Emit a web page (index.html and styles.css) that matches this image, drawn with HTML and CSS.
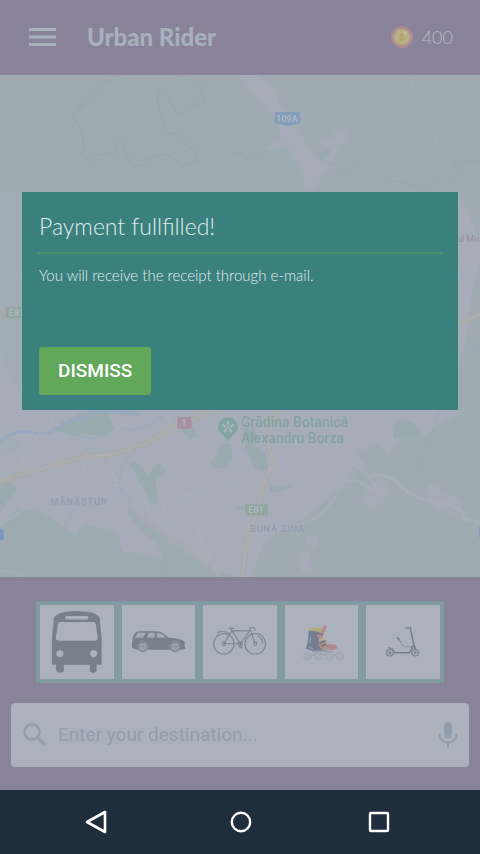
FILE: index.html
```html
<!DOCTYPE html>
<html lang="en">
<head>
<meta charset="utf-8">
<meta name="viewport" content="width=device-width, initial-scale=1">
<title>Urban Rider</title>
<link rel="stylesheet" href="styles.css">
</head>
<body>
<div class="app">
  <header class="topbar">
    <button class="icon-button menu" type="button" aria-label="Menu">
      <svg width="28" height="20" viewBox="0 0 28 20"><path d="M1 2.500H28M1 10H28M1 17.500H28" stroke="currentColor" stroke-width="3"/></svg>
    </button>
    <h1 class="brand">Urban Rider</h1>
    <div class="balance">
      <svg width="22" height="22" viewBox="0 0 22 22" aria-hidden="true">
        <circle cx="11" cy="11" r="11" fill="#ab8b95"/>
        <circle cx="11" cy="11" r="8.500" fill="#b5a783"/>
        <circle cx="11" cy="11" r="7" fill="#b7b183"/>
        <path d="M13 8.800C12 7.700 9 7.800 9 9.500S13 11 13 12.800 10 14.500 8.800 13.200M11 7V15" fill="none" stroke="#b2a06e" stroke-width="1.200"/>
        <circle cx="14.500" cy="7" r="1.500" fill="#bdc2a5"/>
      </svg>
      <span>400</span>
    </div>
  </header>

  <main class="map">
    <svg class="map-canvas" viewBox="0 75 480 502" preserveAspectRatio="xMidYMid slice" role="img" aria-label="City map">
      <rect y="75" width="480" height="502" fill="#a0abb1"/>
      <path fill="#9eacb2" stroke="#9ba5ab" stroke-width="1" d="M118 75L103 84 90 98 72 115 83 133 83 155 90 161 91 157 100 155 115 153 120 141 125 150 132 166 151 165 145 157 165 154 174 158 180 166 199 161 196 153 177 135 166 132 157 100 158 92 165 91 177 115 205 100 200 85 190 80 175 75Z"/>
      <path fill="#9eacb2" d="M230 155L240 152 246 160 262 152 284 143 300 158 312 190 360 184 420 187 461 174 453 162H480V200H230Z"/>
      <path fill="none" stroke="#9aa6ab" opacity=".7" d="M230 155L240 152 246 160 262 152 284 143M328 162L347 173 369 156 392 180 420 187 461 174 453 162H480"/>
      <!-- built-up areas -->
      <path fill="#a5acb7" d="M240 75H257L276 88 278 100 291 120 309 148 318 160 326 163 330 170 321 177 314 190H306L300 168 291 155 288 145 267 151 265 147 282 140 276 120 260 103 247 87ZM318 141L332 138 335 131 346 131 347 138 338 147 332 163 325 157 326 147Z"/>
      <path fill="#a6adb8" d="M0 260L22 240V192H458L480 240V260L470 300 465 345 452 378 458 415 435 426 425 435 400 435 389 454 378 444 357 452 364 465 348 479 320 505 300 520 265 540 250 577H240L216 570 190 547 165 532 130 508 128 514 142 532 163 547 160 570 145 553 125 555 120 545 121 535 108 529 84 524 76 535 55 520 40 512 0 525Z"/>
      <path fill="#a2acb4" d="M0 192H22V400L0 350ZM0 440Q10 436 18 440V452L0 456Z"/>
      <path fill="#9eacb1" d="M0 525L17 508 40 512 76 535 84 524 108 529 121 535 119 552 145 553 163 560V577H0ZM128 512L145 526 172 534 205 565 219 577H163L164 551Z"/>
      <path fill="#a5acb7" d="M366 490L378 478 385 483 390 492 375 508 361 502ZM427 484L437 484 441 492 453 496 463 506 456 515 439 510 428 502ZM299 552L309 553 312 570 300 572ZM307 534L319 537 315 550 306 543Z"/>
      <path fill="#a8abb3" opacity=".7" d="M132 504L158 525 202 550 217 573 175 545 137 516ZM143 466L155 460 160 468 151 473ZM172 431L178 430 181 440 175 442Z"/>
      <!-- parks -->
      <path fill="#9aaaae" d="M53 430L82 412 107 414 115 430 108 437 85 433 75 436ZM130 463L137 462 149 475 154 466 161 463 165 470 156 480 157 502 150 505 147 495 139 481ZM180 431L192 426 198 435 191 439ZM220 443H230L233 458 225 467 216 468 210 462 217 455ZM242 428L254 427 256 446 266 455 269 472 255 468 246 447ZM0 482L12 482 17 488 8 500 0 513ZM9 520L17 520 13 526ZM394 425L400 419 411 422 420 428V437L393 438ZM270 485H292L284 491 270 492ZM235 506H246V509H235ZM318 155L328 148 331 153 322 160Z"/>
      <!-- water -->
      <g fill="none" stroke="#99a8bc">
        <path stroke-width="3" d="M0 442Q14 428 31 432T57 428 80 419 90 410"/>
        <path stroke-width="6" d="M88 412Q116 408 140 413"/>
        <path opacity=".4" stroke-width="2" d="M57 428Q76 438 98 438M119 428Q140 432 152 423T170 412M140 447C121 460 120 475 119 487L130 501V515L155 533 164 555 162 577M78 505L65 526M438 410L434 430 422 456 425 495 429 505M458 276Q470 276 480 271M458 355L480 347"/>
      </g>
      <!-- streets -->
      <g fill="none" stroke="#abb1bd" opacity=".65" stroke-width="2">
        <path d="M50 410L52 425 41 432 24 456 17 485 25 509 81 486 119 485 133 491 148 505 151 516 166 529 168 524 163 510 167 502 180 496 219 485 240 482M82 484L84 460 80 448 85 443 105 438 139 411M110 454L113 474 119 485M25 509L0 524M177 500L190 512 204 545 219 577M235 444L248 462 254 480M205 430L240 415M166 411L171 428M0 571Q15 570 24 577M250 535Q292 528 310 520T337 492 365 485 368 475L328 446 295 424"/>
        <path stroke-width="3" d="M368 476Q388 472 400 485T440 503 462 518L480 522"/>
        <path stroke-width="1" opacity=".7" d="M382 500L392 515 394 530 401 543 389 554 396 565 385 575M368 503V514L350 526 343 525 349 547 343 549 337 531 320 540M397 490L387 502 409 520 448 548 460 512M409 520L425 502M88 553L89 560 72 575M250 565L270 575 320 572M0 234L6 243 12 267 22 281M458 250L475 320 458 350M480 390L458 415"/>
        <path stroke-width="1" opacity=".7" d="M0 175L14 165 13 140 8 128 0 116M14 165L29 185M20 155L22 142M60 175L70 182M240 78L261 85 280 108M284 118L300 145 311 190M412 75V92L431 104 432 122 437 145Q430 165 395 180L389 175 368 158 350 176M412 92L393 85M424 96L426 88M435 145L439 125M426 125L427 112M445 190L447 176"/>
      </g>
      <!-- trunk roads -->
      <g fill="none" stroke-linejoin="round">
        <path stroke="#aaaba6" stroke-width="5" d="M0 482L18 475 55 465 84 456 114 454 153 440 171 427 190 421 210 409M276 408L271 424 269 446 273 465 265 479 258 508 247 541 242 577M458 323L480 314M0 307L8 313"/>
        <path stroke="#acb0b6" stroke-width="2" d="M0 482L18 475 55 465 84 456 114 454 153 440 171 427 190 421 210 409M276 408L271 424 269 446 273 465 265 479 258 508 247 541 242 577M458 323L480 314M0 307L8 313"/>
        <path stroke="#aaaba6" stroke-width="1" d="M14 469L19 465 25 476 19 484 12 478 22 471M80 451L88 461M210 414L228 408"/>
      </g>
      <!-- road shields -->
      <path fill="#839dbb" d="M275 112H300L301 123 288 126 274 123Z"/>
      <text class="shield" x="287" y="122" text-anchor="middle">109A</text>
      <rect x="6" y="307" width="23" height="11" fill="#91a69e"/>
      <text class="shield" x="9" y="316">E81</text>
      <rect x="245" y="504" width="23" height="11" fill="#91a69e"/>
      <text class="shield" x="256" y="513" text-anchor="middle">E81</text>
      <path fill="#a98f9f" d="M178 416Q184 418 191 416L192 427Q190 429 184 429T177 427Z"/>
      <text class="shield" x="184" y="426" text-anchor="middle">1</text>
      <rect x="-8" y="529" width="12" height="11" rx="2" fill="#7c98bf"/>
      <rect x="479" y="526" width="6" height="11" fill="#7c98bf"/>
      <!-- botanical garden pin -->
      <path fill="#81a59e" d="M228 417A10 10 0 0 1 238 427C238 433 230 435 228 442 226 435 218 433 218 427A10 10 0 0 1 228 417Z"/>
      <g stroke="#aab5bc" stroke-width="2.400" stroke-linecap="round"><path d="M228 424V422M231 426L233 425M230 429L231 431M226 429L225 431M225 426L223 425"/></g>
      <circle cx="228" cy="427" r="1.200" fill="#aab5bc"/>
      <text class="place" x="241" y="427">Grădina Botanică</text>
      <text class="place" x="241" y="443">Alexandru Borza</text>
      <text class="district" x="51" y="505">MĂNĂȘTUR</text>
      <text class="district" x="250" y="532">BUNĂ ZIUA</text>
      <text class="museum" x="479" y="242" text-anchor="end">ul Mu</text>
    </svg>
    <section class="dialog" role="dialog" aria-labelledby="dialog-title">
      <h2 class="dialog-title" id="dialog-title">Payment fullfilled!</h2>
      <p class="dialog-text">You will receive the receipt through e-mail.</p>
      <button class="dismiss" type="button">DISMISS</button>
    </section>
  </main>

  <section class="dock">
    <div class="vehicles">
      <button class="vehicle" type="button" aria-label="Bus">
        <svg viewBox="0 0 74 74">
          <path fill="#78818b" fill-rule="evenodd" d="M12 60V34L14 13Q17 6 37 6T60 13L62 34V60H57V65Q57 68 53.500 68T50 65V60H24V65Q24 68 20.500 68T16 65V60ZM27 11A1.500 1.500 0 0 0 27 14.500H47A1.500 1.500 0 0 0 47 11ZM20.500 17Q18.500 17 18 19L16 33Q16 36 19 36H55Q58 36 58 33L56 19Q55.500 17 53.500 17ZM20 45.500A3.500 3.500 0 1 0 20 52.500 3.500 3.500 0 0 0 20 45.500ZM54 45.500A3.500 3.500 0 1 0 54 52.500 3.500 3.500 0 0 0 54 45.500Z"/>
        </svg>
      </button>
      <button class="vehicle" type="button" aria-label="Car">
        <svg viewBox="0 0 74 74">
          <path fill="#78818b" d="M10 40L11 32 14 27 17 26.500H36Q40 27 47 33 60 34 63 37V42L64 44 60 45H16Q10 44 10 42Z"/>
          <path fill="#a4abb5" d="M14 31L16 28H24L21 33H13ZM25 33L27 28H33V33ZM35 28Q40 28 44 33H35Z"/>
          <g fill="#78818b" stroke="#959ea8" stroke-width=".7"><circle cx="21" cy="42" r="5.300"/><circle cx="53.500" cy="42" r="5.300"/></g>
          <g fill="#a0a8b2"><circle cx="21" cy="42" r="3.800"/><circle cx="53.500" cy="42" r="3.800"/></g>
          <path stroke="#88919b" stroke-width=".8" d="M18 42H24M21 39V45M19 40L23 44M23 40L19 44M50.500 42H56.500M53.500 39V45M51.500 40L55.500 44M55.500 40L51.500 44"/>
        </svg>
      </button>
      <button class="vehicle" type="button" aria-label="Bicycle">
        <svg viewBox="0 0 74 74" fill="none" stroke="#7d8690" stroke-width="1.100">
          <circle cx="21" cy="39" r="10.300"/><circle cx="52.500" cy="39" r="10.300"/>
          <circle cx="21" cy="39" r="1.700"/><circle cx="52.500" cy="39" r="1.700"/><circle cx="37.500" cy="39" r="2"/>
          <path d="M21 39L29 26H47L37.500 39 28 24M21 39H37.500M52.500 39L47 23H50Q53 22 52 26M26 23.500H31M14 28Q21 25 27 29M37.500 39L39 43H36M55 31Q60 34 60 39"/>
        </svg>
      </button>
      <button class="vehicle" type="button" aria-label="Roller skates">
        <svg viewBox="0 0 74 74">
          <path fill="#737e91" d="M24 25L34 27 36 36 44 44 42 46H27L21 44 23 36Z"/>
          <path fill="#b08a8c" d="M36 26L39 20.500 42 21 41 25 38 31 39 36 43 39 51 40 53.500 43 50 45 39 46 34 42 34 35 32 30Z"/>
          <path fill="#b3ab86" d="M24 25Q26 22 30 22.500L36 23 37 26 35 28 31 26 24 26ZM34 35L38 32 40 34 35 38ZM38 41L42 38 44 39 40 43Z"/>
          <path stroke="#687387" stroke-width="1.500" d="M33 28L38 30M35 38L41 36M37 41L42 40"/>
          <path stroke="#a1a9b7" stroke-width="1" d="M24 42L28 44M26 32L25 38M38 45L45 44"/>
          <path stroke="#98a0ac" stroke-width="1.500" d="M27 47H49M19 50H56"/>
          <g fill="#a6adb8" stroke="#9aa2ae" stroke-width=".8"><circle cx="22.500" cy="51.500" r="3.800"/><circle cx="33.500" cy="51.500" r="3.800"/><circle cx="44.500" cy="51.500" r="3.800"/><circle cx="55" cy="51.500" r="3.800"/></g>
        </svg>
      </button>
      <button class="vehicle" type="button" aria-label="Scooter">
        <svg viewBox="0 0 74 74" fill="none" stroke="#78818b" stroke-width="1.100">
          <circle cx="24" cy="48" r="3.300"/><circle cx="49.500" cy="48" r="3.300"/>
          <circle cx="24" cy="48" r="1"/><circle cx="49.500" cy="48" r="1"/>
          <path d="M39 23H45.500M22 43Q27 43 29 47"/>
          <path stroke-width="1.500" d="M44.500 23L49 44"/>
          <path stroke-width=".7" d="M33 35Q35 36 35 38T40 42H46"/>
          <path stroke-width="1.700" d="M28 48H44L48 40 50 44M31 33L34 35"/>
        </svg>
      </button>
    </div>
    <form class="search" role="search">
      <label class="search-label" for="destination" aria-label="Destination">
        <svg width="24" height="24" viewBox="0 0 24 24"><circle cx="9" cy="9" r="7.500" fill="none" stroke="currentColor" stroke-width="2.400"/><path d="M14.500 14.500L22.500 22.500" stroke="currentColor" stroke-width="3"/></svg>
      </label>
      <input class="search-input" id="destination" type="text" placeholder="Enter your destination...">
      <button class="icon-button" type="button" aria-label="Voice search">
        <svg width="20" height="26" viewBox="0 0 20 26"><rect x="6" width="8" height="16" rx="4" fill="currentColor"/><path d="M1.500 12A8.500 8.500 0 0 0 18.500 12M10 20.500V26" fill="none" stroke="currentColor" stroke-width="2"/></svg>
      </button>
    </form>
  </section>

  <nav class="system-nav" aria-label="System navigation">
    <button class="icon-button" type="button" aria-label="Back">
      <svg width="28" height="24" viewBox="0 0 28 24"><path d="M20 2V22L2 12Z" fill="none" stroke="currentColor" stroke-width="2.600" stroke-linejoin="round"/></svg>
    </button>
    <button class="icon-button" type="button" aria-label="Home">
      <svg width="22" height="24" viewBox="0 0 22 24"><circle cx="11" cy="12" r="9.200" fill="none" stroke="currentColor" stroke-width="2.400"/></svg>
    </button>
    <button class="icon-button" type="button" aria-label="Recent apps">
      <svg width="22" height="24" viewBox="0 0 22 24"><rect x="2" y="3" width="18" height="18" rx="1" fill="none" stroke="currentColor" stroke-width="2.400"/></svg>
    </button>
  </nav>
</div>
</body>
</html>
```
FILE: styles.css
```css
* {
  box-sizing: border-box;
}

body {
  margin: 0;
  font-family: Lato, "Liberation Sans", sans-serif;
  background: #88839a;
}

button,
input {
  font: inherit;
  color: inherit;
  border: 0;
  padding: 0;
  background: none;
}

svg {
  display: block;
}

.app {
  display: flex;
  flex-direction: column;
  min-height: 100vh;
}

.icon-button {
  display: flex;
  flex: none;
}

.topbar {
  display: flex;
  align-items: center;
  padding: 19px 27px 21px 28px;
  color: #a8b1bb;
}

.brand {
  flex: 1;
  margin: 0 0 0 31px;
  font-size: 24px;
  line-height: 35px;
  font-weight: 900;
}

.balance {
  display: flex;
  align-items: center;
  gap: 9px;
  color: #b5bdc8;
  font-size: 18px;
  font-weight: 300;
}

.map {
  position: relative;
  display: flex;
  flex: 1;
  align-items: flex-start;
  padding: 117px 22px 160px;
}

.map-canvas {
  position: absolute;
  inset: 0;
  width: 100%;
  height: 100%;
}

.shield {
  font: 700 9px Roboto, sans-serif;
  fill: #abb7c2;
}

.place {
  font: 500 14px Roboto, sans-serif;
  fill: #86a1a2;
}

.district {
  font: 500 9px Roboto, sans-serif;
  letter-spacing: 1px;
  fill: #929aac;
}

.museum {
  font: 400 9px Roboto, sans-serif;
  fill: #958f96;
}

.dialog {
  position: relative;
  flex: 1;
  padding: 18px 15px 15px;
  background: #3a817e;
  color: #e1eeec;
  font-weight: 300;
}

.dialog-title {
  margin: 0;
  padding: 0 2px 9px;
  border-bottom: 2px solid #4b9167;
  font-size: 23px;
  line-height: 33px;
  font-weight: 300;
}

.dialog-text {
  margin: 10px 2px 61px;
  font-size: 15px;
  line-height: 22px;
}

.dismiss {
  margin-left: 2px;
  padding: 0 19px;
  border-radius: 3px;
  background: #62a85b;
  color: #fff;
  font: 500 19px/48px Roboto, sans-serif;
}

.dock {
  display: flex;
  flex-direction: column;
  gap: 20px;
  padding: 24px 11px 23px;
}

.vehicles {
  display: grid;
  grid-template-columns: repeat(5, 1fr);
  margin: 0 25px;
}

.vehicle {
  border: 4px solid #829ba1;
  background: #abb2bc;
}

.search {
  display: flex;
  align-items: center;
  height: 64px;
  padding: 0 11px 0 12px;
  border-radius: 4px;
  background: #abb2bc;
  color: #929dac;
}

.search-input {
  flex: 1;
  min-width: 0;
  margin-left: 11px;
  font-family: Roboto, sans-serif;
  font-size: 19px;
  line-height: 24px;
}

.search-input::placeholder {
  color: #929dac;
  opacity: 1;
}

.system-nav {
  display: flex;
  align-items: center;
  justify-content: space-between;
  height: 64px;
  padding: 0 90px 0 85px;
  background: #1f2d3d;
  color: #fff;
}
```
